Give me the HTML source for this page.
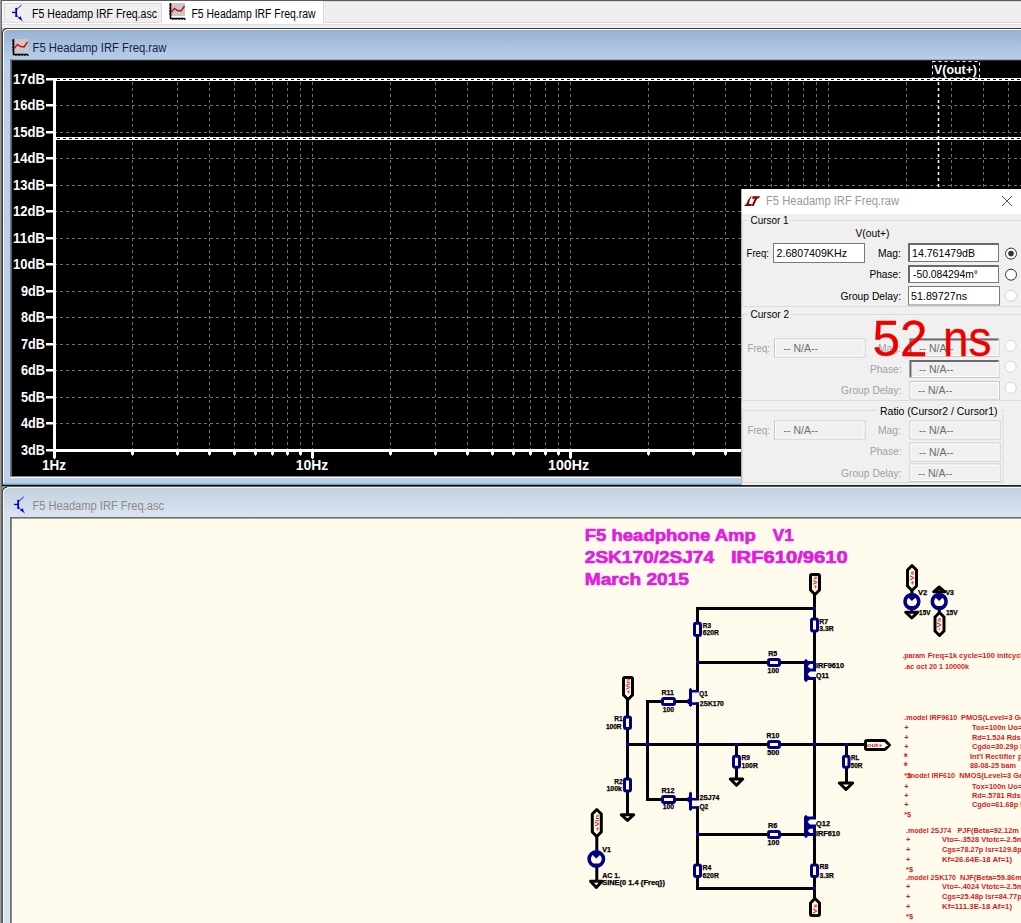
<!DOCTYPE html>
<html><head><meta charset="utf-8"><style>
html,body{margin:0;padding:0;width:1021px;height:923px;overflow:hidden;background:#f0f0f0}
svg{position:absolute;left:0;top:0;display:block}
text{font-family:"Liberation Sans", sans-serif}
</style></head><body>
<svg width="1021" height="923" viewBox="0 0 1021 923">
<rect x="0" y="0" width="1021" height="28" fill="#f0f0f0"/><rect x="0" y="0" width="1021" height="1" fill="#5a5a5a"/><rect x="0" y="0" width="1" height="923" fill="#9a9a9a"/><rect x="1" y="0" width="1" height="923" fill="#6a6a6a"/><rect x="2" y="1" width="1019" height="27" fill="#f7f7f7"/><rect x="4.5" y="3.5" width="157" height="19" fill="#efefef" stroke="#d9d9d9" stroke-width="1"/><rect x="162" y="1" width="161" height="23" fill="#ffffff"/><rect x="323.5" y="1.5" width="700" height="21" fill="#efefef" stroke="#d9d9d9" stroke-width="1"/><rect x="2" y="23" width="1019" height="5" fill="#f0f0f0"/><rect x="162" y="23" width="161" height="1" fill="#ffffff"/><rect x="2" y="24" width="1019" height="1" fill="#e0e0e0"/><rect x="2" y="23" width="1019" height="1" fill="#ffffff"/><rect x="2" y="22" width="160" height="1" fill="#dcdcdc"/><rect x="2" y="28" width="1019" height="1" fill="#3c3c3c"/><g transform="translate(12,5)"><rect x="0" y="6.8" width="3.8" height="1.3" fill="#0000c8"/><rect x="3.3" y="2.8" width="1.8" height="9.2" fill="#0000c8"/><path d="M4.8 4.2L9.8 -0.1" stroke="#0000c8" stroke-width="0.9" fill="none"/><path d="M4.8 10.6L10.6 15.9" stroke="#0000c8" stroke-width="0.9" fill="none"/><path d="M6.6 13.2L8.6 11.8L9.3 14.6Z" fill="#0000c8" stroke="#0000c8" stroke-width="0.8"/></g><text x="32" y="17.5" font-size="12" fill="#000" textLength="125" lengthAdjust="spacingAndGlyphs">F5 Headamp IRF Freq.asc</text><g transform="translate(169,3)"><rect x="2" y="0" width="14" height="13" fill="#c8c8c8"/><path d="M1.5 0V15.5H16" stroke="#000" stroke-width="1.6" fill="none"/><path d="M0 2H1.5M0 5H1.5M0 8H1.5M0 11H1.5M4 15.5V17M7 15.5V17M10 15.5V17M13 15.5V17M16 15.5V17" stroke="#000" stroke-width="1.2"/><path d="M2 9.5L5.5 5.5L8.5 7.5L12 8L15.5 3" stroke="#d01010" stroke-width="1.5" fill="none"/></g><text x="191.5" y="17.5" font-size="12" fill="#000" textLength="124" lengthAdjust="spacingAndGlyphs">F5 Headamp IRF Freq.raw</text><rect x="2" y="29" width="1019" height="458" fill="#3c3c3c"/><rect x="3" y="29" width="1018" height="456" fill="#ffffff"/><defs><linearGradient id="gA" x1="0" y1="0" x2="0" y2="1"><stop offset="0" stop-color="#98b2d0"/><stop offset="1" stop-color="#b8d0ea"/></linearGradient><linearGradient id="gI" x1="0" y1="0" x2="0" y2="1"><stop offset="0" stop-color="#c2d0de"/><stop offset="1" stop-color="#dbe6f2"/></linearGradient></defs><rect x="4" y="30" width="1017" height="454" fill="#b9d1ea"/><rect x="4" y="30" width="1017" height="30" fill="url(#gA)"/><rect x="3" y="483.5" width="1018" height="1.3" fill="#78b4c6"/><rect x="2" y="484.8" width="1019" height="1.4" fill="#0a1014"/><path d="M2 28.2H7.2Q3 28.6 2.2 33.5V28.2Z" fill="#f0f0f0"/><path d="M2.5 34V33.2Q2.7 28.7 7.4 28.6" stroke="#3a3a3a" stroke-width="1.1" fill="none"/><path d="M3.5 35V33.6Q3.7 29.8 7.6 29.6" stroke="#ffffff" stroke-width="1" fill="none"/><g transform="translate(12,39)"><rect x="2" y="0" width="14" height="13" fill="#c8c8c8"/><path d="M1.5 0V15.5H16" stroke="#000" stroke-width="1.6" fill="none"/><path d="M0 2H1.5M0 5H1.5M0 8H1.5M0 11H1.5M4 15.5V17M7 15.5V17M10 15.5V17M13 15.5V17M16 15.5V17" stroke="#000" stroke-width="1.2"/><path d="M2 9.5L5.5 5.5L8.5 7.5L12 8L15.5 3" stroke="#d01010" stroke-width="1.5" fill="none"/></g><text x="32.5" y="52" font-size="12" fill="#1a1a50" textLength="134" lengthAdjust="spacingAndGlyphs">F5 Headamp IRF Freq.raw</text><rect x="10" y="59" width="1011" height="419" fill="#ffffff"/><rect x="10" y="59" width="1011" height="1" fill="#9ba6b2"/><rect x="10" y="60" width="1011" height="1" fill="#4a4a4a"/><rect x="10" y="59" width="1.5" height="418" fill="#7a7a7a"/><rect x="11.5" y="60.6" width="1010" height="415.9" fill="#000000"/><line x1="54" y1="450.5" x2="1021" y2="450.5" stroke="#707070" stroke-width="1" stroke-dasharray="3 3"/><line x1="54" y1="423.5" x2="1021" y2="423.5" stroke="#707070" stroke-width="1" stroke-dasharray="3 3"/><line x1="54" y1="397.5" x2="1021" y2="397.5" stroke="#707070" stroke-width="1" stroke-dasharray="3 3"/><line x1="54" y1="370.5" x2="1021" y2="370.5" stroke="#707070" stroke-width="1" stroke-dasharray="3 3"/><line x1="54" y1="344.5" x2="1021" y2="344.5" stroke="#707070" stroke-width="1" stroke-dasharray="3 3"/><line x1="54" y1="317.5" x2="1021" y2="317.5" stroke="#707070" stroke-width="1" stroke-dasharray="3 3"/><line x1="54" y1="291.5" x2="1021" y2="291.5" stroke="#707070" stroke-width="1" stroke-dasharray="3 3"/><line x1="54" y1="264.5" x2="1021" y2="264.5" stroke="#707070" stroke-width="1" stroke-dasharray="3 3"/><line x1="54" y1="238.5" x2="1021" y2="238.5" stroke="#707070" stroke-width="1" stroke-dasharray="3 3"/><line x1="54" y1="211.5" x2="1021" y2="211.5" stroke="#707070" stroke-width="1" stroke-dasharray="3 3"/><line x1="54" y1="185.5" x2="1021" y2="185.5" stroke="#707070" stroke-width="1" stroke-dasharray="3 3"/><line x1="54" y1="158.5" x2="1021" y2="158.5" stroke="#707070" stroke-width="1" stroke-dasharray="3 3"/><line x1="54" y1="132.5" x2="1021" y2="132.5" stroke="#707070" stroke-width="1" stroke-dasharray="3 3"/><line x1="54" y1="105.5" x2="1021" y2="105.5" stroke="#707070" stroke-width="1" stroke-dasharray="3 3"/><line x1="54" y1="79.5" x2="1021" y2="79.5" stroke="#707070" stroke-width="1" stroke-dasharray="3 3"/><line x1="132.5" y1="82" x2="132.5" y2="449" stroke="#707070" stroke-width="1" stroke-dasharray="3 3"/><path d="M131.0 452V454L132.5 456L134.0 454V452Z" fill="#fff"/><line x1="177.5" y1="82" x2="177.5" y2="449" stroke="#707070" stroke-width="1" stroke-dasharray="3 3"/><path d="M176.0 452V454L177.5 456L179.0 454V452Z" fill="#fff"/><line x1="209.5" y1="82" x2="209.5" y2="449" stroke="#707070" stroke-width="1" stroke-dasharray="3 3"/><path d="M208.0 452V454L209.5 456L211.0 454V452Z" fill="#fff"/><line x1="234.5" y1="82" x2="234.5" y2="449" stroke="#707070" stroke-width="1" stroke-dasharray="3 3"/><path d="M233.0 452V454L234.5 456L236.0 454V452Z" fill="#fff"/><line x1="255.5" y1="82" x2="255.5" y2="449" stroke="#707070" stroke-width="1" stroke-dasharray="3 3"/><path d="M254.0 452V454L255.5 456L257.0 454V452Z" fill="#fff"/><line x1="272.5" y1="82" x2="272.5" y2="449" stroke="#707070" stroke-width="1" stroke-dasharray="3 3"/><path d="M271.0 452V454L272.5 456L274.0 454V452Z" fill="#fff"/><line x1="287.5" y1="82" x2="287.5" y2="449" stroke="#707070" stroke-width="1" stroke-dasharray="3 3"/><path d="M286.0 452V454L287.5 456L289.0 454V452Z" fill="#fff"/><line x1="300.5" y1="82" x2="300.5" y2="449" stroke="#707070" stroke-width="1" stroke-dasharray="3 3"/><path d="M299.0 452V454L300.5 456L302.0 454V452Z" fill="#fff"/><line x1="312.5" y1="82" x2="312.5" y2="449" stroke="#707070" stroke-width="1" stroke-dasharray="3 3"/><path d="M311.0 452V457.5L312.5 459.5L314.0 457.5V452Z" fill="#fff"/><line x1="390.5" y1="82" x2="390.5" y2="449" stroke="#707070" stroke-width="1" stroke-dasharray="3 3"/><path d="M389.0 452V454L390.5 456L392.0 454V452Z" fill="#fff"/><line x1="435.5" y1="82" x2="435.5" y2="449" stroke="#707070" stroke-width="1" stroke-dasharray="3 3"/><path d="M434.0 452V454L435.5 456L437.0 454V452Z" fill="#fff"/><line x1="467.5" y1="82" x2="467.5" y2="449" stroke="#707070" stroke-width="1" stroke-dasharray="3 3"/><path d="M466.0 452V454L467.5 456L469.0 454V452Z" fill="#fff"/><line x1="492.5" y1="82" x2="492.5" y2="449" stroke="#707070" stroke-width="1" stroke-dasharray="3 3"/><path d="M491.0 452V454L492.5 456L494.0 454V452Z" fill="#fff"/><line x1="513.5" y1="82" x2="513.5" y2="449" stroke="#707070" stroke-width="1" stroke-dasharray="3 3"/><path d="M512.0 452V454L513.5 456L515.0 454V452Z" fill="#fff"/><line x1="530.5" y1="82" x2="530.5" y2="449" stroke="#707070" stroke-width="1" stroke-dasharray="3 3"/><path d="M529.0 452V454L530.5 456L532.0 454V452Z" fill="#fff"/><line x1="545.5" y1="82" x2="545.5" y2="449" stroke="#707070" stroke-width="1" stroke-dasharray="3 3"/><path d="M544.0 452V454L545.5 456L547.0 454V452Z" fill="#fff"/><line x1="558.5" y1="82" x2="558.5" y2="449" stroke="#707070" stroke-width="1" stroke-dasharray="3 3"/><path d="M557.0 452V454L558.5 456L560.0 454V452Z" fill="#fff"/><line x1="570.5" y1="82" x2="570.5" y2="449" stroke="#707070" stroke-width="1" stroke-dasharray="3 3"/><path d="M569.0 452V457.5L570.5 459.5L572.0 457.5V452Z" fill="#fff"/><line x1="648.5" y1="82" x2="648.5" y2="449" stroke="#707070" stroke-width="1" stroke-dasharray="3 3"/><path d="M647.0 452V454L648.5 456L650.0 454V452Z" fill="#fff"/><line x1="693.5" y1="82" x2="693.5" y2="449" stroke="#707070" stroke-width="1" stroke-dasharray="3 3"/><path d="M692.0 452V454L693.5 456L695.0 454V452Z" fill="#fff"/><line x1="725.5" y1="82" x2="725.5" y2="449" stroke="#707070" stroke-width="1" stroke-dasharray="3 3"/><path d="M724.0 452V454L725.5 456L727.0 454V452Z" fill="#fff"/><line x1="750.5" y1="82" x2="750.5" y2="449" stroke="#707070" stroke-width="1" stroke-dasharray="3 3"/><path d="M749.0 452V454L750.5 456L752.0 454V452Z" fill="#fff"/><line x1="771.5" y1="82" x2="771.5" y2="449" stroke="#707070" stroke-width="1" stroke-dasharray="3 3"/><path d="M770.0 452V454L771.5 456L773.0 454V452Z" fill="#fff"/><line x1="788.5" y1="82" x2="788.5" y2="449" stroke="#707070" stroke-width="1" stroke-dasharray="3 3"/><path d="M787.0 452V454L788.5 456L790.0 454V452Z" fill="#fff"/><line x1="803.5" y1="82" x2="803.5" y2="449" stroke="#707070" stroke-width="1" stroke-dasharray="3 3"/><path d="M802.0 452V454L803.5 456L805.0 454V452Z" fill="#fff"/><line x1="816.5" y1="82" x2="816.5" y2="449" stroke="#707070" stroke-width="1" stroke-dasharray="3 3"/><path d="M815.0 452V454L816.5 456L818.0 454V452Z" fill="#fff"/><line x1="828.5" y1="82" x2="828.5" y2="449" stroke="#707070" stroke-width="1" stroke-dasharray="3 3"/><path d="M827.0 452V457.5L828.5 459.5L830.0 457.5V452Z" fill="#fff"/><line x1="906.5" y1="82" x2="906.5" y2="449" stroke="#707070" stroke-width="1" stroke-dasharray="3 3"/><path d="M905.0 452V454L906.5 456L908.0 454V452Z" fill="#fff"/><line x1="951.5" y1="82" x2="951.5" y2="449" stroke="#707070" stroke-width="1" stroke-dasharray="3 3"/><path d="M950.0 452V454L951.5 456L953.0 454V452Z" fill="#fff"/><line x1="983.5" y1="82" x2="983.5" y2="449" stroke="#707070" stroke-width="1" stroke-dasharray="3 3"/><path d="M982.0 452V454L983.5 456L985.0 454V452Z" fill="#fff"/><line x1="1008.5" y1="82" x2="1008.5" y2="449" stroke="#707070" stroke-width="1" stroke-dasharray="3 3"/><path d="M1007.0 452V454L1008.5 456L1010.0 454V452Z" fill="#fff"/><line x1="1029.5" y1="82" x2="1029.5" y2="449" stroke="#707070" stroke-width="1" stroke-dasharray="3 3"/><path d="M1028.0 452V454L1029.5 456L1031.0 454V452Z" fill="#fff"/><line x1="1046.5" y1="82" x2="1046.5" y2="449" stroke="#707070" stroke-width="1" stroke-dasharray="3 3"/><path d="M1045.0 452V454L1046.5 456L1048.0 454V452Z" fill="#fff"/><line x1="1061.5" y1="82" x2="1061.5" y2="449" stroke="#707070" stroke-width="1" stroke-dasharray="3 3"/><path d="M1060.0 452V454L1061.5 456L1063.0 454V452Z" fill="#fff"/><line x1="1074.5" y1="82" x2="1074.5" y2="449" stroke="#707070" stroke-width="1" stroke-dasharray="3 3"/><path d="M1073.0 452V454L1074.5 456L1076.0 454V452Z" fill="#fff"/><path d="M53 78H56V457.5L54.5 459.5L53 457.5Z" fill="#fff"/><rect x="53" y="449" width="968" height="3" fill="#fff"/><rect x="46" y="449" width="8" height="2.5" fill="#fff"/><text x="21" y="455" font-size="14.3" fill="#fff" font-weight="bold" textLength="24" lengthAdjust="spacingAndGlyphs">3dB</text><rect x="46" y="422" width="8" height="2.5" fill="#fff"/><text x="21" y="428" font-size="14.3" fill="#fff" font-weight="bold" textLength="24" lengthAdjust="spacingAndGlyphs">4dB</text><rect x="46" y="396" width="8" height="2.5" fill="#fff"/><text x="21" y="402" font-size="14.3" fill="#fff" font-weight="bold" textLength="24" lengthAdjust="spacingAndGlyphs">5dB</text><rect x="46" y="369" width="8" height="2.5" fill="#fff"/><text x="21" y="375" font-size="14.3" fill="#fff" font-weight="bold" textLength="24" lengthAdjust="spacingAndGlyphs">6dB</text><rect x="46" y="343" width="8" height="2.5" fill="#fff"/><text x="21" y="349" font-size="14.3" fill="#fff" font-weight="bold" textLength="24" lengthAdjust="spacingAndGlyphs">7dB</text><rect x="46" y="316" width="8" height="2.5" fill="#fff"/><text x="21" y="322" font-size="14.3" fill="#fff" font-weight="bold" textLength="24" lengthAdjust="spacingAndGlyphs">8dB</text><rect x="46" y="290" width="8" height="2.5" fill="#fff"/><text x="21" y="296" font-size="14.3" fill="#fff" font-weight="bold" textLength="24" lengthAdjust="spacingAndGlyphs">9dB</text><rect x="46" y="263" width="8" height="2.5" fill="#fff"/><text x="13" y="269" font-size="14.3" fill="#fff" font-weight="bold" textLength="32" lengthAdjust="spacingAndGlyphs">10dB</text><rect x="46" y="237" width="8" height="2.5" fill="#fff"/><text x="13" y="243" font-size="14.3" fill="#fff" font-weight="bold" textLength="32" lengthAdjust="spacingAndGlyphs">11dB</text><rect x="46" y="210" width="8" height="2.5" fill="#fff"/><text x="13" y="216" font-size="14.3" fill="#fff" font-weight="bold" textLength="32" lengthAdjust="spacingAndGlyphs">12dB</text><rect x="46" y="184" width="8" height="2.5" fill="#fff"/><text x="13" y="190" font-size="14.3" fill="#fff" font-weight="bold" textLength="32" lengthAdjust="spacingAndGlyphs">13dB</text><rect x="46" y="157" width="8" height="2.5" fill="#fff"/><text x="13" y="163" font-size="14.3" fill="#fff" font-weight="bold" textLength="32" lengthAdjust="spacingAndGlyphs">14dB</text><rect x="46" y="131" width="8" height="2.5" fill="#fff"/><text x="13" y="137" font-size="14.3" fill="#fff" font-weight="bold" textLength="32" lengthAdjust="spacingAndGlyphs">15dB</text><rect x="46" y="104" width="8" height="2.5" fill="#fff"/><text x="13" y="110" font-size="14.3" fill="#fff" font-weight="bold" textLength="32" lengthAdjust="spacingAndGlyphs">16dB</text><rect x="46" y="78" width="8" height="2.5" fill="#fff"/><text x="13" y="84" font-size="14.3" fill="#fff" font-weight="bold" textLength="32" lengthAdjust="spacingAndGlyphs">17dB</text><text x="42" y="470.3" font-size="14.3" fill="#fff" font-weight="bold" textLength="24" lengthAdjust="spacingAndGlyphs">1Hz</text><text x="295.7" y="470.3" font-size="14.3" fill="#fff" font-weight="bold" textLength="32.5" lengthAdjust="spacingAndGlyphs">10Hz</text><text x="548" y="470.3" font-size="14.3" fill="#fff" font-weight="bold" textLength="41" lengthAdjust="spacingAndGlyphs">100Hz</text><rect x="56" y="78.0" width="965" height="3" fill="#fff"/><line x1="57" y1="79.5" x2="1021" y2="79.5" stroke="#000" stroke-width="1" stroke-dasharray="3 3"/><rect x="56" y="137.0" width="965" height="3" fill="#fff"/><line x1="57" y1="138.5" x2="1021" y2="138.5" stroke="#000" stroke-width="1" stroke-dasharray="3 3"/><line x1="938.5" y1="82" x2="938.5" y2="449" stroke="#fff" stroke-width="1.5" stroke-dasharray="3 3"/><rect x="932.5" y="61.5" width="47" height="16.5" fill="#000" stroke="#fff" stroke-width="1" stroke-dasharray="3 3"/><text x="934" y="74.3" font-size="13" fill="#fff" font-weight="bold" textLength="43" lengthAdjust="spacingAndGlyphs">V(out+)</text><rect x="741" y="189" width="280" height="296" fill="#f0f0f0"/><rect x="741" y="189" width="280" height="25" fill="#ffffff"/><rect x="741" y="189" width="1" height="296" fill="#b4b4b4"/><path d="M750.9 196.2Q748.2 199 746.6 203.6L744 206H751.2L752 203.9H748.9Q749.6 199.6 751.8 196.6Z" fill="#8b0000"/><path d="M752.4 196.2H760.2L758.6 198.6H757.2L753.6 206H751.4L754.8 198.6Q753.2 198.6 752.4 199.4Z" fill="#8b0000"/><text x="766" y="205" font-size="12" fill="#9a9a9a" textLength="133" lengthAdjust="spacingAndGlyphs">F5 Headamp IRF Freq.raw</text><path d="M1002 196L1012 206M1012 196L1002 206" stroke="#555" stroke-width="1"/><rect x="742.5" y="220.5" width="288" height="86" fill="none" stroke="#dcdcdc"/><rect x="748.5" y="215" width="42" height="10" fill="#f0f0f0"/><text x="750.5" y="224" font-size="11.5" fill="#000" textLength="38" lengthAdjust="spacingAndGlyphs">Cursor 1</text><rect x="742.5" y="314.5" width="288" height="86" fill="none" stroke="#dcdcdc"/><rect x="748.5" y="309" width="42.5" height="10" fill="#f0f0f0"/><text x="750.5" y="318" font-size="11.5" fill="#000" textLength="38.5" lengthAdjust="spacingAndGlyphs">Cursor 2</text><rect x="742.5" y="410.5" width="260.5" height="72" fill="none" stroke="#dcdcdc"/><rect x="877" y="404" width="124" height="12" fill="#f0f0f0"/><text x="880" y="415" font-size="11.5" fill="#000" textLength="117.5" lengthAdjust="spacingAndGlyphs">Ratio (Cursor2 / Cursor1)</text><text x="855.5" y="236.5" font-size="11.5" fill="#000" textLength="34" lengthAdjust="spacingAndGlyphs">V(out+)</text><text x="746.5" y="257" font-size="11.5" fill="#000" textLength="22.5" lengthAdjust="spacingAndGlyphs">Freq:</text><rect x="773.5" y="243.5" width="91" height="19" fill="#fff" stroke="#7a7a7a"/><text x="776.5" y="257.0" font-size="11.5" fill="#000" textLength="70.5" lengthAdjust="spacingAndGlyphs">2.6807409KHz</text><text x="878" y="257" font-size="11.5" fill="#000" textLength="23" lengthAdjust="spacingAndGlyphs">Mag:</text><rect x="908.5" y="243.5" width="90" height="18" fill="#fff" stroke="#7a7a7a"/><path d="M909 261V244H998" stroke="#6a6a6a" stroke-width="2" fill="none"/><text x="912" y="256.5" font-size="11.5" fill="#000" textLength="63" lengthAdjust="spacingAndGlyphs">14.761479dB</text><text x="869.5" y="278" font-size="11.5" fill="#000" textLength="31.5" lengthAdjust="spacingAndGlyphs">Phase:</text><rect x="908.5" y="265.5" width="90" height="17" fill="#fff" stroke="#7a7a7a"/><path d="M909 282V266H998" stroke="#6a6a6a" stroke-width="2" fill="none"/><text x="913" y="278.0" font-size="11.5" fill="#000" textLength="65" lengthAdjust="spacingAndGlyphs">-50.084294m°</text><text x="840.5" y="299.5" font-size="11.5" fill="#000" textLength="60.5" lengthAdjust="spacingAndGlyphs">Group Delay:</text><rect x="908.5" y="286.5" width="91" height="18.5" fill="#fff" stroke="#7a7a7a"/><text x="911" y="299.75" font-size="11.5" fill="#000" textLength="56" lengthAdjust="spacingAndGlyphs">51.89727ns</text><circle cx="1011" cy="253.6" r="5.5" fill="#fff" stroke="#333" stroke-width="1"/><circle cx="1011" cy="253.6" r="2.8" fill="#333"/><circle cx="1011" cy="274.7" r="5.5" fill="#fff" stroke="#333" stroke-width="1"/><circle cx="1011" cy="295.7" r="5.5" fill="#fff" stroke="#d5d5d5" stroke-width="1"/><text x="747.5" y="351.5" font-size="11.5" fill="#a0a0a0" textLength="22.5" lengthAdjust="spacingAndGlyphs">Freq:</text><rect x="774.5" y="339.0" width="90.5" height="18" fill="#f0f0f0" stroke="#c6c6c6"/><rect x="775.5" y="340.0" width="88.5" height="16" fill="none" stroke="#ffffff"/><text x="783.5" y="352.0" font-size="11.5" fill="#6d6d6d" textLength="34.5" lengthAdjust="spacingAndGlyphs">-- N/A--</text><text x="878" y="351.5" font-size="11.5" fill="#a0a0a0" textLength="23" lengthAdjust="spacingAndGlyphs">Mag:</text><rect x="910.0" y="339.0" width="89" height="17.5" fill="#f0f0f0" stroke="#c6c6c6"/><rect x="911.0" y="340.0" width="87" height="15.5" fill="none" stroke="#ffffff"/><path d="M910.5 356.0V339.5H998.5" stroke="#6a6a6a" stroke-width="2" fill="none"/><text x="919" y="351.75" font-size="11.5" fill="#6d6d6d" textLength="34.5" lengthAdjust="spacingAndGlyphs">-- N/A--</text><text x="870" y="372.5" font-size="11.5" fill="#a0a0a0" textLength="31.5" lengthAdjust="spacingAndGlyphs">Phase:</text><rect x="910.0" y="360.5" width="89" height="17" fill="#f0f0f0" stroke="#c6c6c6"/><rect x="911.0" y="361.5" width="87" height="15" fill="none" stroke="#ffffff"/><path d="M910.5 377V361H998.5" stroke="#6a6a6a" stroke-width="2" fill="none"/><text x="919" y="373.0" font-size="11.5" fill="#6d6d6d" textLength="34.5" lengthAdjust="spacingAndGlyphs">-- N/A--</text><text x="841" y="393.5" font-size="11.5" fill="#a0a0a0" textLength="60.5" lengthAdjust="spacingAndGlyphs">Group Delay:</text><rect x="910.0" y="381.5" width="89.5" height="17.5" fill="#f0f0f0" stroke="#c6c6c6"/><rect x="911.0" y="382.5" width="87.5" height="15.5" fill="none" stroke="#ffffff"/><text x="918" y="394.25" font-size="11.5" fill="#6d6d6d" textLength="34.5" lengthAdjust="spacingAndGlyphs">-- N/A--</text><circle cx="1010.7" cy="345.7" r="5.5" fill="#fff" stroke="#d5d5d5" stroke-width="1"/><circle cx="1010.7" cy="366.7" r="5.5" fill="#fff" stroke="#d5d5d5" stroke-width="1"/><circle cx="1010.7" cy="387.9" r="5.5" fill="#fff" stroke="#d5d5d5" stroke-width="1"/><text x="747.5" y="433.5" font-size="11.5" fill="#a0a0a0" textLength="22.5" lengthAdjust="spacingAndGlyphs">Freq:</text><rect x="774.5" y="421.0" width="90.5" height="18" fill="#f0f0f0" stroke="#c6c6c6"/><rect x="775.5" y="422.0" width="88.5" height="16" fill="none" stroke="#ffffff"/><text x="783.5" y="434.0" font-size="11.5" fill="#6d6d6d" textLength="34.5" lengthAdjust="spacingAndGlyphs">-- N/A--</text><text x="878" y="433.5" font-size="11.5" fill="#a0a0a0" textLength="23" lengthAdjust="spacingAndGlyphs">Mag:</text><rect x="910.0" y="421.0" width="90" height="18" fill="#f0f0f0" stroke="#c6c6c6"/><rect x="911.0" y="422.0" width="88" height="16" fill="none" stroke="#ffffff"/><text x="919" y="434.0" font-size="11.5" fill="#6d6d6d" textLength="34.5" lengthAdjust="spacingAndGlyphs">-- N/A--</text><text x="870" y="455" font-size="11.5" fill="#a0a0a0" textLength="31.5" lengthAdjust="spacingAndGlyphs">Phase:</text><rect x="910.0" y="443.0" width="90" height="18" fill="#f0f0f0" stroke="#c6c6c6"/><rect x="911.0" y="444.0" width="88" height="16" fill="none" stroke="#ffffff"/><text x="919" y="456.0" font-size="11.5" fill="#6d6d6d" textLength="34.5" lengthAdjust="spacingAndGlyphs">-- N/A--</text><text x="841" y="476.5" font-size="11.5" fill="#a0a0a0" textLength="60.5" lengthAdjust="spacingAndGlyphs">Group Delay:</text><rect x="910.0" y="464.0" width="90" height="17.5" fill="#f0f0f0" stroke="#c6c6c6"/><rect x="911.0" y="465.0" width="88" height="15.5" fill="none" stroke="#ffffff"/><text x="918" y="476.75" font-size="11.5" fill="#6d6d6d" textLength="34.5" lengthAdjust="spacingAndGlyphs">-- N/A--</text><text x="872.5" y="356.2" font-size="49.5" fill="#ee0000" textLength="55" lengthAdjust="spacingAndGlyphs" stroke="#ee0000" stroke-width="0.3">52</text><text x="943" y="356.2" font-size="49.5" fill="#ee0000" textLength="48.5" lengthAdjust="spacingAndGlyphs" stroke="#ee0000" stroke-width="0.3">ns</text><rect x="741" y="485" width="280" height="1.5" fill="#1e1e1e"/><rect x="2" y="486" width="1019" height="437" fill="#5a5a5a"/><rect x="3" y="487" width="1018" height="436" fill="#f4f6f8"/><rect x="4" y="488" width="1017" height="435" fill="#d6e4f2"/><rect x="4" y="488" width="1017" height="30" fill="url(#gI)"/><rect x="2" y="486.2" width="1019" height="0.8" fill="#5a6066"/><path d="M2 486.6H7.4Q3.2 487 2.4 491.5V486.6Z" fill="#bfc3c8"/><path d="M2.6 492V491.2Q2.9 487.3 7.2 487.1" stroke="#3a3a3a" stroke-width="1.1" fill="none"/><path d="M3.6 493V491.8Q3.9 488.3 7.8 488.1" stroke="#f4f6f8" stroke-width="1" fill="none"/><g transform="translate(14,497)"><rect x="0" y="6.8" width="3.8" height="1.3" fill="#0000c8"/><rect x="3.3" y="2.8" width="1.8" height="9.2" fill="#0000c8"/><path d="M4.8 4.2L9.8 -0.1" stroke="#0000c8" stroke-width="0.9" fill="none"/><path d="M4.8 10.6L10.6 15.9" stroke="#0000c8" stroke-width="0.9" fill="none"/><path d="M6.6 13.2L8.6 11.8L9.3 14.6Z" fill="#0000c8" stroke="#0000c8" stroke-width="0.8"/></g><text x="32.5" y="510" font-size="12" fill="#8a8a8a" textLength="131.5" lengthAdjust="spacingAndGlyphs">F5 Headamp IRF Freq.asc</text><rect x="10" y="517" width="1011" height="406" fill="#6e6e6e"/><rect x="11.8" y="518.6" width="1010" height="405" fill="#fffbec"/><path d="M697.5 608.5H814.5" stroke="#000" stroke-width="3" fill="none" stroke-linecap="square"/><path d="M697.5 608.5V690" stroke="#000" stroke-width="3" fill="none" stroke-linecap="square"/><path d="M697.5 704V798.5" stroke="#000" stroke-width="3" fill="none" stroke-linecap="square"/><path d="M697.5 808V888.5H814.5" stroke="#000" stroke-width="3" fill="none" stroke-linecap="square"/><path d="M814.5 596V662" stroke="#000" stroke-width="3" fill="none" stroke-linecap="square"/><path d="M814.5 679V817" stroke="#000" stroke-width="3" fill="none" stroke-linecap="square"/><path d="M814.5 835V897" stroke="#000" stroke-width="3" fill="none" stroke-linecap="square"/><path d="M697.5 662.5H805" stroke="#000" stroke-width="3" fill="none" stroke-linecap="square"/><path d="M697.5 834.5H805" stroke="#000" stroke-width="3" fill="none" stroke-linecap="square"/><path d="M627.5 700V813" stroke="#000" stroke-width="3" fill="none" stroke-linecap="square"/><path d="M627.5 744.5H864" stroke="#000" stroke-width="3" fill="none" stroke-linecap="square"/><path d="M647.5 744.5V701.5H688" stroke="#000" stroke-width="3" fill="none" stroke-linecap="square"/><path d="M647.5 744.5V799.5H688" stroke="#000" stroke-width="3" fill="none" stroke-linecap="square"/><path d="M736.5 744.5V778" stroke="#000" stroke-width="3" fill="none" stroke-linecap="square"/><path d="M846.5 744.5V782" stroke="#000" stroke-width="3" fill="none" stroke-linecap="square"/><path d="M596.8 838V880" stroke="#000" stroke-width="3" fill="none" stroke-linecap="square"/><path d="M911.9 592V611" stroke="#000" stroke-width="3" fill="none" stroke-linecap="square"/><path d="M939.2 593V611" stroke="#000" stroke-width="3" fill="none" stroke-linecap="square"/><rect x="694.5" y="623.3" width="6" height="12.200000000000045" rx="1.5" fill="#fffbec" stroke="#000080" stroke-width="3"/><rect x="811.5" y="619.0" width="6" height="12.0" rx="1.5" fill="#fffbec" stroke="#000080" stroke-width="3"/><rect x="624.5" y="717.0" width="6" height="11.5" rx="1.5" fill="#fffbec" stroke="#000080" stroke-width="3"/><rect x="624.5" y="779.0" width="6" height="12.0" rx="1.5" fill="#fffbec" stroke="#000080" stroke-width="3"/><rect x="733.5" y="756.3" width="6" height="11.0" rx="1.5" fill="#fffbec" stroke="#000080" stroke-width="3"/><rect x="843.5" y="756.3" width="5.5" height="11.0" rx="1.5" fill="#fffbec" stroke="#000080" stroke-width="3"/><rect x="694.5" y="865.0" width="6" height="11.5" rx="1.5" fill="#fffbec" stroke="#000080" stroke-width="3"/><rect x="811.5" y="865.0" width="6" height="11.5" rx="1.5" fill="#fffbec" stroke="#000080" stroke-width="3"/><rect x="768.5" y="659.5" width="11" height="6" rx="1.5" fill="#fffbec" stroke="#000080" stroke-width="3"/><rect x="662.5" y="698.5" width="12" height="6" rx="1.5" fill="#fffbec" stroke="#000080" stroke-width="3"/><rect x="662.5" y="796.5" width="12" height="6" rx="1.5" fill="#fffbec" stroke="#000080" stroke-width="3"/><rect x="768.5" y="741.5" width="11" height="6" rx="1.5" fill="#fffbec" stroke="#000080" stroke-width="3"/><rect x="768.5" y="831.5" width="11" height="6" rx="1.5" fill="#fffbec" stroke="#000080" stroke-width="3"/><path d="M689 689.3L690.5 687.8L692 689.3V705.5L690.5 707L689 705.5Z" fill="#000080"/><rect x="691" y="689.9000000000001" width="8.0" height="2.6" fill="#000080"/><rect x="691" y="702.3000000000001" width="8.0" height="2.6" fill="#000080"/><path d="M687 699.9L689 698.4V704.4L687 702.9Z" fill="#000080"/><path d="M689 793.0L690.5 791.5L692 793.0V809.5L690.5 811L689 809.5Z" fill="#000080"/><rect x="691" y="797.9000000000001" width="8.0" height="2.6" fill="#000080"/><rect x="691" y="806.2" width="8.0" height="2.6" fill="#000080"/><path d="M687 798.0L689 796.5V802.5L687 801.0Z" fill="#000080"/><path d="M804 661L806 658.8L808 661V680L806 682.2L804 680Z" fill="#000080"/><rect x="806" y="661" width="10" height="19" fill="#000080"/><path d="M807.6 666.3L810 664H813V668.6H810Z" fill="#fffbec"/><path d="M807.6 674.3L810 671.6H816.5V677H810Z" fill="#fffbec"/><path d="M804 817L806 814.8L808 817V836L806 838.2L804 836Z" fill="#000080"/><rect x="806" y="816.5" width="10" height="19.5" fill="#000080"/><path d="M807.6 821.8L810 819.5H816.5V824.5H810Z" fill="#fffbec"/><path d="M807.6 830.8L810 828.7H813V833H810Z" fill="#fffbec"/><rect x="813.0" y="607.0" width="3" height="3" fill="#0000d0"/><rect x="696.0" y="661.0" width="3" height="3" fill="#0000d0"/><rect x="626.0" y="743.0" width="3" height="3" fill="#0000d0"/><rect x="646.0" y="743.0" width="3" height="3" fill="#0000d0"/><rect x="696.0" y="743.0" width="3" height="3" fill="#0000d0"/><rect x="735.0" y="743.0" width="3" height="3" fill="#0000d0"/><rect x="813.0" y="743.0" width="3" height="3" fill="#0000d0"/><rect x="845.0" y="743.0" width="3" height="3" fill="#0000d0"/><rect x="696.0" y="833.0" width="3" height="3" fill="#0000d0"/><rect x="813.0" y="887.0" width="3" height="3" fill="#0000d0"/><path d="M810.5 576Q810.5 574.5 812 574.5H818Q819.5 574.5 819.5 576V590.0L815.0 594.5L810.5 590.0Z" fill="#fffbec" stroke="#000" stroke-width="3" stroke-linejoin="round"/><text transform="translate(816.8,582.5) rotate(-90)" font-size="6" font-weight="bold" fill="#e01818" text-anchor="middle" textLength="13" lengthAdjust="spacingAndGlyphs">+Vs</text><path d="M623.5 679Q623.5 677.5 625 677.5H631Q632.5 677.5 632.5 679V695.0L628.0 699.5L623.5 695.0Z" fill="#fffbec" stroke="#000" stroke-width="3" stroke-linejoin="round"/><text transform="translate(629.8,686.5) rotate(-90)" font-size="6" font-weight="bold" fill="#e01818" text-anchor="middle" textLength="15" lengthAdjust="spacingAndGlyphs">+Vin</text><path d="M810.5 914Q810.5 915.5 812 915.5H818Q819.5 915.5 819.5 914V903.0L815.0 898.5L810.5 903.0Z" fill="#fffbec" stroke="#000" stroke-width="3" stroke-linejoin="round"/><text transform="translate(816.8,910.0) rotate(-90)" font-size="6" font-weight="bold" fill="#e01818" text-anchor="middle" textLength="12" lengthAdjust="spacingAndGlyphs">-Vs</text><path d="M596.8 809.5L601.3 814.0V832.0L596.8 836.5L592.3 832.0V814.0Z" fill="#fffbec" stroke="#000" stroke-width="3" stroke-linejoin="round"/><text transform="translate(598.5999999999999,823.0) rotate(-90)" font-size="6" font-weight="bold" fill="#e01818" text-anchor="middle" textLength="16" lengthAdjust="spacingAndGlyphs">+Vin</text><path d="M912.0 565.5L916.5 570.0V586.0L912.0 590.5L907.5 586.0V570.0Z" fill="#fffbec" stroke="#000" stroke-width="3" stroke-linejoin="round"/><text transform="translate(913.8,578.0) rotate(-90)" font-size="6" font-weight="bold" fill="#e01818" text-anchor="middle" textLength="14" lengthAdjust="spacingAndGlyphs">+Vs</text><path d="M939.5 612.5L944.0 617.0V631.0L939.5 635.5L935.0 631.0V617.0Z" fill="#fffbec" stroke="#000" stroke-width="3" stroke-linejoin="round"/><text transform="translate(941.3,624.0) rotate(-90)" font-size="6" font-weight="bold" fill="#e01818" text-anchor="middle" textLength="13" lengthAdjust="spacingAndGlyphs">-Vs</text><path d="M867 740.5H885.0L889.5 745.0L885.0 749.5H867Q865.5 749.5 865.5 748V742Q865.5 740.5 867 740.5Z" fill="#fffbec" stroke="#000" stroke-width="3" stroke-linejoin="round"/><text x="867" y="747.2" font-size="6" font-weight="bold" fill="#e01818" textLength="15.5" lengthAdjust="spacingAndGlyphs">out+</text><path d="M621.25 814.7H633.75L627.5 820.5Z" fill="#fffbec" stroke="#000" stroke-width="3" stroke-linejoin="round"/><path d="M730.25 779.0H742.75L736.5 785.3Z" fill="#fffbec" stroke="#000" stroke-width="3" stroke-linejoin="round"/><path d="M839.35 783.0H852.65L846 789.5Z" fill="#fffbec" stroke="#000" stroke-width="3" stroke-linejoin="round"/><path d="M590.55 881.2H602.05L596.3 887.5Z" fill="#fffbec" stroke="#000" stroke-width="3" stroke-linejoin="round"/><path d="M905.6999999999999 612.2H917.9L911.8 618.0Z" fill="#fffbec" stroke="#000" stroke-width="3" stroke-linejoin="round"/><path d="M933.7 591.8H944.7L939.2 587.0Z" fill="#fffbec" stroke="#000" stroke-width="3" stroke-linejoin="round"/><circle cx="596.3" cy="859" r="7.2" fill="#fffbec" stroke="#000080" stroke-width="3.6"/><path d="M591.3 852L592.0999999999999 854.4L596.3 858.4L600.5 854.4L601.3 852Z" fill="#000080"/><path d="M593.0999999999999 866L593.6999999999999 863.6H598.9L599.5 866Z" fill="#000080"/><circle cx="911.9" cy="601.5" r="6.8999999999999995" fill="#fffbec" stroke="#000080" stroke-width="3.6"/><path d="M906.9 594.5L907.6999999999999 596.9L911.9 600.9L916.1 596.9L916.9 594.5Z" fill="#000080"/><path d="M908.6999999999999 608.5L909.3 606.1H914.5L915.1 608.5Z" fill="#000080"/><circle cx="939.2" cy="601.5" r="6.8999999999999995" fill="#fffbec" stroke="#000080" stroke-width="3.6"/><path d="M934.2 594.5L935.0 596.9L939.2 600.9L943.4000000000001 596.9L944.2 594.5Z" fill="#000080"/><path d="M936.0 608.5L936.6 606.1H941.8000000000001L942.4000000000001 608.5Z" fill="#000080"/><text x="702.8" y="628" font-size="7" fill="#000" font-weight="bold" textLength="8.2" lengthAdjust="spacingAndGlyphs" stroke="#000" stroke-width="0.25">R3</text><text x="702.8" y="635" font-size="7" fill="#000" font-weight="bold" textLength="16" lengthAdjust="spacingAndGlyphs" stroke="#000" stroke-width="0.25">620R</text><text x="819.3" y="624.3" font-size="7" fill="#000" font-weight="bold" textLength="8.8" lengthAdjust="spacingAndGlyphs" stroke="#000" stroke-width="0.25">R7</text><text x="819.3" y="631.3" font-size="7" fill="#000" font-weight="bold" textLength="14.5" lengthAdjust="spacingAndGlyphs" stroke="#000" stroke-width="0.25">3.3R</text><text x="768.2" y="655.8" font-size="7" fill="#000" font-weight="bold" textLength="9" lengthAdjust="spacingAndGlyphs" stroke="#000" stroke-width="0.25">R5</text><text x="767.6" y="673.2" font-size="7" fill="#000" font-weight="bold" textLength="11.4" lengthAdjust="spacingAndGlyphs" stroke="#000" stroke-width="0.25">100</text><text x="816" y="668" font-size="7" fill="#000" font-weight="bold" textLength="28" lengthAdjust="spacingAndGlyphs" stroke="#000" stroke-width="0.25">IRF9610</text><text x="816" y="677.7" font-size="7" fill="#000" font-weight="bold" textLength="13" lengthAdjust="spacingAndGlyphs" stroke="#000" stroke-width="0.25">Q11</text><text x="661.5" y="695" font-size="7" fill="#000" font-weight="bold" textLength="12.5" lengthAdjust="spacingAndGlyphs" stroke="#000" stroke-width="0.25">R11</text><text x="662.7" y="712" font-size="7" fill="#000" font-weight="bold" textLength="11.3" lengthAdjust="spacingAndGlyphs" stroke="#000" stroke-width="0.25">100</text><text x="614.2" y="721.3" font-size="7" fill="#000" font-weight="bold" textLength="8.4" lengthAdjust="spacingAndGlyphs" stroke="#000" stroke-width="0.25">R1</text><text x="605.9" y="729.2" font-size="7" fill="#000" font-weight="bold" textLength="15.7" lengthAdjust="spacingAndGlyphs" stroke="#000" stroke-width="0.25">100R</text><text x="699.3" y="696.2" font-size="7" fill="#000" font-weight="bold" textLength="8.6" lengthAdjust="spacingAndGlyphs" stroke="#000" stroke-width="0.25">Q1</text><text x="699.8" y="705.8" font-size="7" fill="#000" font-weight="bold" textLength="24" lengthAdjust="spacingAndGlyphs" stroke="#000" stroke-width="0.25">2SK170</text><text x="614.2" y="784" font-size="7" fill="#000" font-weight="bold" textLength="8.4" lengthAdjust="spacingAndGlyphs" stroke="#000" stroke-width="0.25">R2</text><text x="606.5" y="791" font-size="7" fill="#000" font-weight="bold" textLength="15.5" lengthAdjust="spacingAndGlyphs" stroke="#000" stroke-width="0.25">100k</text><text x="661.5" y="792.8" font-size="7" fill="#000" font-weight="bold" textLength="13" lengthAdjust="spacingAndGlyphs" stroke="#000" stroke-width="0.25">R12</text><text x="662.7" y="808.6" font-size="7" fill="#000" font-weight="bold" textLength="11.3" lengthAdjust="spacingAndGlyphs" stroke="#000" stroke-width="0.25">100</text><text x="699.4" y="799.8" font-size="7" fill="#000" font-weight="bold" textLength="19.9" lengthAdjust="spacingAndGlyphs" stroke="#000" stroke-width="0.25">2SJ74</text><text x="699.4" y="809.2" font-size="7" fill="#000" font-weight="bold" textLength="8.9" lengthAdjust="spacingAndGlyphs" stroke="#000" stroke-width="0.25">Q2</text><text x="602.2" y="852" font-size="7" fill="#000" font-weight="bold" textLength="8.7" lengthAdjust="spacingAndGlyphs" stroke="#000" stroke-width="0.25">V1</text><text x="602.2" y="878.4" font-size="7" fill="#000" font-weight="bold" textLength="18" lengthAdjust="spacingAndGlyphs" stroke="#000" stroke-width="0.25">AC 1.</text><text x="602.2" y="884.6" font-size="7" fill="#000" font-weight="bold" textLength="62.8" lengthAdjust="spacingAndGlyphs" stroke="#000" stroke-width="0.25">SINE(0 1.4 {Freq})</text><text x="741.5" y="760.4" font-size="7" fill="#000" font-weight="bold" textLength="8.5" lengthAdjust="spacingAndGlyphs" stroke="#000" stroke-width="0.25">R9</text><text x="741.5" y="768.2" font-size="7" fill="#000" font-weight="bold" textLength="16.3" lengthAdjust="spacingAndGlyphs" stroke="#000" stroke-width="0.25">100R</text><text x="766.6" y="738.4" font-size="7" fill="#000" font-weight="bold" textLength="12.7" lengthAdjust="spacingAndGlyphs" stroke="#000" stroke-width="0.25">R10</text><text x="767.2" y="755" font-size="7" fill="#000" font-weight="bold" textLength="12.1" lengthAdjust="spacingAndGlyphs" stroke="#000" stroke-width="0.25">500</text><text x="851" y="760.4" font-size="7" fill="#000" font-weight="bold" textLength="8.2" lengthAdjust="spacingAndGlyphs" stroke="#000" stroke-width="0.25">RL</text><text x="850.5" y="768.2" font-size="7" fill="#000" font-weight="bold" textLength="12" lengthAdjust="spacingAndGlyphs" stroke="#000" stroke-width="0.25">50R</text><text x="768.1" y="828.2" font-size="7" fill="#000" font-weight="bold" textLength="9.3" lengthAdjust="spacingAndGlyphs" stroke="#000" stroke-width="0.25">R6</text><text x="767.6" y="845" font-size="7" fill="#000" font-weight="bold" textLength="11.7" lengthAdjust="spacingAndGlyphs" stroke="#000" stroke-width="0.25">100</text><text x="816" y="825.5" font-size="7" fill="#000" font-weight="bold" textLength="14" lengthAdjust="spacingAndGlyphs" stroke="#000" stroke-width="0.25">Q12</text><text x="816" y="835.6" font-size="7" fill="#000" font-weight="bold" textLength="24" lengthAdjust="spacingAndGlyphs" stroke="#000" stroke-width="0.25">IRF610</text><text x="702.5" y="870.3" font-size="7" fill="#000" font-weight="bold" textLength="8.8" lengthAdjust="spacingAndGlyphs" stroke="#000" stroke-width="0.25">R4</text><text x="702.5" y="877.6" font-size="7" fill="#000" font-weight="bold" textLength="16.3" lengthAdjust="spacingAndGlyphs" stroke="#000" stroke-width="0.25">620R</text><text x="819.5" y="869.2" font-size="7" fill="#000" font-weight="bold" textLength="8.8" lengthAdjust="spacingAndGlyphs" stroke="#000" stroke-width="0.25">R8</text><text x="819.5" y="878.2" font-size="7" fill="#000" font-weight="bold" textLength="14.3" lengthAdjust="spacingAndGlyphs" stroke="#000" stroke-width="0.25">3.3R</text><text x="918" y="595.3" font-size="7" fill="#000" font-weight="bold" textLength="9.2" lengthAdjust="spacingAndGlyphs" stroke="#000" stroke-width="0.25">V2</text><text x="919.1" y="615.2" font-size="7" fill="#000" font-weight="bold" textLength="11.4" lengthAdjust="spacingAndGlyphs" stroke="#000" stroke-width="0.25">15V</text><text x="945.6" y="595.3" font-size="7" fill="#000" font-weight="bold" textLength="8.3" lengthAdjust="spacingAndGlyphs" stroke="#000" stroke-width="0.25">V3</text><text x="945.9" y="615.2" font-size="7" fill="#000" font-weight="bold" textLength="11.7" lengthAdjust="spacingAndGlyphs" stroke="#000" stroke-width="0.25">15V</text><text x="584.8" y="540.6" font-size="16.5" fill="#e01ee0" font-weight="bold" textLength="171" lengthAdjust="spacingAndGlyphs" stroke="#e01ee0" stroke-width="0.7">F5 headphone Amp</text><text x="772.8" y="540.6" font-size="16.5" fill="#e01ee0" font-weight="bold" textLength="21" lengthAdjust="spacingAndGlyphs" stroke="#e01ee0" stroke-width="0.7">V1</text><text x="584.8" y="562.6" font-size="16.5" fill="#e01ee0" font-weight="bold" textLength="129.2" lengthAdjust="spacingAndGlyphs" stroke="#e01ee0" stroke-width="0.7">2SK170/2SJ74</text><text x="731" y="562.6" font-size="16.5" fill="#e01ee0" font-weight="bold" textLength="116.7" lengthAdjust="spacingAndGlyphs" stroke="#e01ee0" stroke-width="0.7">IRF610/9610</text><text x="584.8" y="585.1" font-size="16.5" fill="#e01ee0" font-weight="bold" textLength="104.2" lengthAdjust="spacingAndGlyphs" stroke="#e01ee0" stroke-width="0.7">March 2015</text><text x="902.4" y="657.6" font-size="7.4" fill="#d41c1c" font-weight="bold" textLength="22.8" lengthAdjust="spacingAndGlyphs">.param</text><text x="927.7" y="657.6" font-size="7.4" fill="#d41c1c" font-weight="bold" textLength="29.6" lengthAdjust="spacingAndGlyphs">Freq=1k</text><text x="959" y="657.6" font-size="7.4" fill="#d41c1c" font-weight="bold" textLength="36" lengthAdjust="spacingAndGlyphs">cycle=100</text><text x="996.9" y="657.6" font-size="7.4" fill="#d41c1c" font-weight="bold">initcycles</text><text x="904.3" y="669" font-size="7.4" fill="#d41c1c" font-weight="bold" textLength="64.7" lengthAdjust="spacingAndGlyphs">.ac oct 20 1 10000k</text><text x="904.2" y="720" font-size="7.4" fill="#d41c1c" font-weight="bold" textLength="53.1" lengthAdjust="spacingAndGlyphs">.model IRF9610</text><text x="961" y="720" font-size="7.4" fill="#d41c1c" font-weight="bold">PMOS(Level=3 Gamma=0</text><text x="904.3" y="730.2" font-size="7.4" fill="#d41c1c" font-weight="bold">+</text><text x="972" y="730.2" font-size="7.4" fill="#d41c1c" font-weight="bold">Tox=100n Uo=300</text><text x="904.3" y="739.5" font-size="7.4" fill="#d41c1c" font-weight="bold">+</text><text x="972" y="739.5" font-size="7.4" fill="#d41c1c" font-weight="bold">Rd=1.524 Rds=444.4K</text><text x="904.3" y="749.3" font-size="7.4" fill="#d41c1c" font-weight="bold">+</text><text x="972" y="749.3" font-size="7.4" fill="#d41c1c" font-weight="bold">Cgdo=30.29p Rg=</text><text x="903.8" y="761.2" font-size="10" fill="#d41c1c" font-weight="bold">*</text><text x="970" y="758.8" font-size="7.4" fill="#d41c1c" font-weight="bold" textLength="45.4" lengthAdjust="spacingAndGlyphs">Int'l Rectifier</text><text x="1018" y="758.8" font-size="7.4" fill="#d41c1c" font-weight="bold">pid</text><text x="903.8" y="770" font-size="10" fill="#d41c1c" font-weight="bold">*</text><text x="970" y="768.1" font-size="7.4" fill="#d41c1c" font-weight="bold" textLength="46" lengthAdjust="spacingAndGlyphs">88-08-25 bam</text><text x="904.2" y="778.3" font-size="7.4" fill="#d41c1c" font-weight="bold">*$</text><text x="906.5" y="778.3" font-size="7.4" fill="#d41c1c" font-weight="bold" textLength="48.5" lengthAdjust="spacingAndGlyphs">.model IRF610</text><text x="959.2" y="778.3" font-size="7.4" fill="#d41c1c" font-weight="bold">NMOS(Level=3 Gamma=0</text><text x="904.3" y="788.5" font-size="7.4" fill="#d41c1c" font-weight="bold">+</text><text x="972" y="788.5" font-size="7.4" fill="#d41c1c" font-weight="bold">Tox=100n Uo=600</text><text x="904.3" y="798.3" font-size="7.4" fill="#d41c1c" font-weight="bold">+</text><text x="972" y="798.3" font-size="7.4" fill="#d41c1c" font-weight="bold">Rd=.5781 Rds=444.4K</text><text x="904.3" y="807.4" font-size="7.4" fill="#d41c1c" font-weight="bold">+</text><text x="972" y="807.4" font-size="7.4" fill="#d41c1c" font-weight="bold">Cgdo=61.68p Rg=</text><text x="904.2" y="817.2" font-size="7.4" fill="#d41c1c" font-weight="bold">*$</text><text x="906" y="833.4" font-size="7.4" fill="#d41c1c" font-weight="bold" textLength="45.1" lengthAdjust="spacingAndGlyphs">.model 2SJ74</text><text x="957.4" y="833.4" font-size="7.4" fill="#d41c1c" font-weight="bold">PJF(Beta=92.12m Betatce</text><text x="906" y="842.4" font-size="7.4" fill="#d41c1c" font-weight="bold">+</text><text x="942" y="842.4" font-size="7.4" fill="#d41c1c" font-weight="bold">Vto=-.3528 Vtotc=-2.5m</text><text x="906" y="852.3" font-size="7.4" fill="#d41c1c" font-weight="bold">+</text><text x="942" y="852.3" font-size="7.4" fill="#d41c1c" font-weight="bold">Cgs=78.27p Isr=129.8p</text><text x="906" y="862.3" font-size="7.4" fill="#d41c1c" font-weight="bold">+</text><text x="942" y="862.3" font-size="7.4" fill="#d41c1c" font-weight="bold" textLength="70.1" lengthAdjust="spacingAndGlyphs">Kf=26.64E-18 Af=1)</text><text x="906" y="871.8" font-size="7.4" fill="#d41c1c" font-weight="bold">*$</text><text x="906" y="879.5" font-size="7.4" fill="#d41c1c" font-weight="bold" textLength="50" lengthAdjust="spacingAndGlyphs">.model 2SK170</text><text x="959.9" y="879.5" font-size="7.4" fill="#d41c1c" font-weight="bold">NJF(Beta=59.86m Betatce</text><text x="906" y="889.3" font-size="7.4" fill="#d41c1c" font-weight="bold">+</text><text x="942" y="889.3" font-size="7.4" fill="#d41c1c" font-weight="bold">Vto=-.4024 Vtotc=-2.5m</text><text x="906" y="899.4" font-size="7.4" fill="#d41c1c" font-weight="bold">+</text><text x="942" y="899.4" font-size="7.4" fill="#d41c1c" font-weight="bold">Cgs=25.48p Isr=84.77p</text><text x="906" y="909.2" font-size="7.4" fill="#d41c1c" font-weight="bold">+</text><text x="942" y="909.2" font-size="7.4" fill="#d41c1c" font-weight="bold" textLength="70" lengthAdjust="spacingAndGlyphs">Kf=111.3E-18 Af=1)</text><text x="906" y="918.5" font-size="7.4" fill="#d41c1c" font-weight="bold">*$</text>
</svg>
</body></html>
